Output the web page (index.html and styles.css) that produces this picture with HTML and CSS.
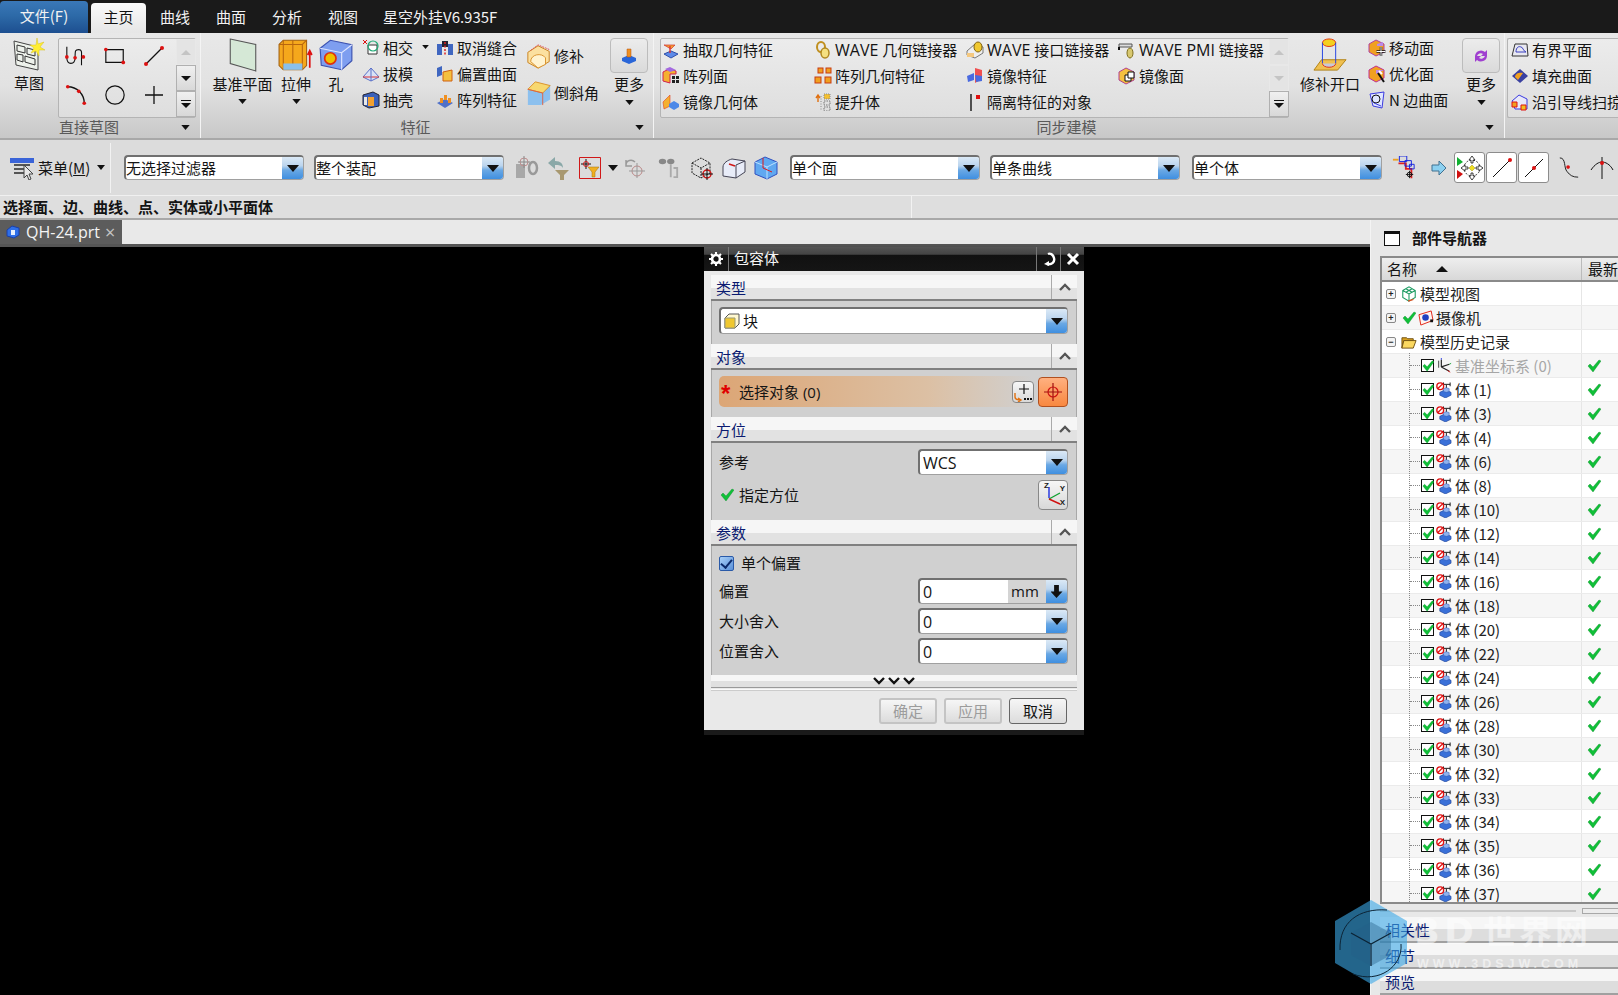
FILE: index.html
```html
<!DOCTYPE html>
<html lang="zh-CN">
<head>
<meta charset="utf-8">
<title>包容体</title>
<link rel="stylesheet" href="styles.css">
</head>
<body>
<svg class="defs" xmlns="http://www.w3.org/2000/svg">
  <symbol id="caret" viewBox="0 0 10 6"><path d="M0 0h10L5 6z" fill="#111"/></symbol>
  <symbol id="sketch" viewBox="0 0 32 34"><path d="M1 3l24 6v23L3 27z" fill="#eef2ec" stroke="#444"/><path d="M4 7l8 2v6l-8-2zM14 10l8 2v6l-8-2zM4 16l6 1v7l-6-2zM12 18l10 3v6l-10-3z" fill="none" stroke="#333"/><path d="M24 0l1 6 6-2-4 5 5 3-6 0 0 6-3-5-5 2 3-5-4-3 6 0z" fill="#ffee33" stroke="#d8c020" stroke-width=".5"/></symbol>
  <symbol id="spline" viewBox="0 0 24 22"><path d="M2 1v12c0 8 9 8 9 0s0-9 4-9 3 4 3 8v9" fill="none" stroke="#111" stroke-width="1.2"/><g fill="#d11"><circle cx="2" cy="12" r="2"/><circle cx="11" cy="13" r="2"/><circle cx="20" cy="12" r="2"/></g></symbol>
  <symbol id="rect" viewBox="0 0 24 20"><path d="M2 3h19v14H2z" fill="none" stroke="#111" stroke-width="1.3"/><circle cx="2" cy="3" r="2" fill="#d11"/><circle cx="21" cy="17" r="2" fill="#d11"/></symbol>
  <symbol id="line" viewBox="0 0 22 22"><path d="M3 19L19 3" stroke="#111" stroke-width="1.3"/><circle cx="3" cy="19" r="2" fill="#d11"/><circle cx="19" cy="3" r="2" fill="#d11"/></symbol>
  <symbol id="arc" viewBox="0 0 24 24"><path d="M3 3c10 0 18 8 18 18" fill="none" stroke="#111" stroke-width="1.4"/><circle cx="3" cy="3" r="2" fill="#d11"/><circle cx="15" cy="8" r="2" fill="#d11"/><circle cx="21" cy="21" r="2" fill="#d11"/></symbol>
  <symbol id="circle" viewBox="0 0 24 24"><circle cx="12" cy="12" r="10" fill="none" stroke="#111" stroke-width="1.3"/></symbol>
  <symbol id="plus" viewBox="0 0 20 20"><path d="M10 1v18M1 10h18" stroke="#111" stroke-width="1.3"/></symbol>
  <symbol id="plane" viewBox="0 0 28 32"><path d="M2 1l24 5v25L2 24z" fill="#d5e8d6" stroke="#555"/></symbol>
  <symbol id="extrude" viewBox="0 0 34 32"><path d="M1 6l4-4h22v24l-4 4H5l-4-4z" fill="#f5a81c" stroke="#a06010"/><path d="M5 2v28M14 2v28M23 6v24M1 6h22l4-4" fill="none" stroke="#b8660e"/><path d="M5 24h18v6H5z" fill="#8ac0ea"/><path d="M30 28V13M28 16l2-4 2 4" fill="none" stroke="#d11" stroke-width="1.6"/></symbol>
  <symbol id="hole" viewBox="0 0 30 30"><path d="M1 9l9-7 19 4v14l-9 8L2 24z" fill="#7e9ef0" stroke="#3c52b0"/><path d="M1 9l19 4 9-7M20 13v15" fill="none" stroke="#dfe6ff"/><circle cx="10" cy="18" r="5" fill="#f0c000" stroke="#e03010" stroke-width="1.5"/></symbol>
  <symbol id="doc" viewBox="0 0 14 14"><path d="M1 5l5-4 7 2v7l-5 3-7-2z" fill="#2f6fe8" stroke="#1a3fa8"/><path d="M5 5h4v5H5z" fill="#e8f0ff"/></symbol>
  <symbol id="s-inter" viewBox="0 0 18 18"><path d="M6 6h9v9H6z" fill="#fff" stroke="#333"/><circle cx="11" cy="7" r="5" fill="none" stroke="#2a7" stroke-width="1.2"/><path d="M1 1l4 4M5 1L1 5" stroke="#d11"/></symbol>
  <symbol id="s-draft" viewBox="0 0 18 18"><path d="M1 12l8-9 8 9-8 4z" fill="#d9e2f6" stroke="#5a70c8"/><path d="M1 12h16" stroke="#d33"/><path d="M9 3v13" stroke="#5a70c8"/></symbol>
  <symbol id="s-shell" viewBox="0 0 18 18"><path d="M1 4l10-3 6 3v11l-10 2-6-3z" fill="#3a60b8" stroke="#223"/><path d="M6 6h6v9H6z" fill="#f2a030"/><path d="M2 6h3v8H2z" fill="#e8e8e8"/></symbol>
  <symbol id="s-unsew" viewBox="0 0 18 18"><path d="M1 5h5v11H1zM12 5h5v11h-5z" fill="#3f66c0"/><path d="M6 2h6v6H6z" fill="#223"/><path d="M9 3v14" stroke="#d22" stroke-dasharray="2 1.5" stroke-width="1.5"/></symbol>
  <symbol id="s-offset" viewBox="0 0 18 18"><path d="M1 3l5-2v9l-5 2z" fill="#3f66c0"/><path d="M7 7l9-2v11H7z" fill="#f4c040" stroke="#d06010"/></symbol>
  <symbol id="s-array" viewBox="0 0 18 18"><path d="M1 12l8-4 8 4-8 5z" fill="#4f70c8"/><path d="M4 7h3v5H4zM8 4h3v5H8zM12 7h3v5h-3z" fill="#f09020"/></symbol>
  <symbol id="s-patch" viewBox="0 0 26 28"><path d="M1 10l11-7 12 6v11l-12 7-11-6z" fill="#fbe0a0" stroke="#c8801c"/><path d="M4 20c0-8 12-10 16-4v7l-8 4z" fill="#fff3d0" stroke="#d89028"/><path d="M4 8l8-6 12 5" fill="none" stroke="#e05050" stroke-dasharray="2 1"/></symbol>
  <symbol id="s-chamfer" viewBox="0 0 26 28"><path d="M1 10v17h14l10-6V6z" fill="#8cc0ee"/><path d="M1 10l8-8 16 4-8 8z" fill="#f7d870" stroke="#d89028"/><path d="M1 10l16 4v13" fill="none" stroke="#e06040"/></symbol>
  <symbol id="more1" viewBox="0 0 16 16"><path d="M1 10l7-3 7 3v3l-7 3-7-3z" fill="#2a66d8"/><path d="M6 1h4v8H6z" fill="#f09020" stroke="#b05010" stroke-width=".5"/></symbol>
  <symbol id="more2" viewBox="0 0 16 16"><path d="M2 8a6 6 0 0 1 10-4l2-2v6H8l2-2a4 4 0 0 0-6 2zM14 8a6 6 0 0 1-10 4l-2 2V8h6l-2 2a4 4 0 0 0 6-2z" fill="#a040d0"/></symbol>
  <symbol id="g-extract" viewBox="0 0 18 18"><path d="M2 13l7-3 7 3-7 4z" fill="#5d8ae8" stroke="#3050a8"/><path d="M2 4h11L9 8z" fill="#f4a030" stroke="#d03030" stroke-width=".7"/><path d="M8 5v7" stroke="#d33" stroke-width="1.4"/></symbol>
  <symbol id="g-chain" viewBox="0 0 18 18"><ellipse cx="7" cy="6" rx="4" ry="5" fill="none" stroke="#c09020" stroke-width="2"/><ellipse cx="11" cy="12" rx="4" ry="5" fill="#f5e080" stroke="#b08820" stroke-width="1.5"/></symbol>
  <symbol id="g-iface" viewBox="0 0 18 18"><path d="M1 10l8-7 8 3v6l-8 5-8-3z" fill="#eee" stroke="#777"/><ellipse cx="12" cy="6" rx="4" ry="5" fill="#f0c830" stroke="#806010"/><path d="M1 12h7v4H1z" fill="#f4c880"/></symbol>
  <symbol id="g-pmi" viewBox="0 0 18 18"><path d="M1 3h13v3H1z" fill="#ddd" stroke="#555"/><path d="M1 6v3" stroke="#111" stroke-width="2"/><ellipse cx="12" cy="12" rx="3" ry="5" fill="#d8c870" stroke="#807020"/></symbol>
  <symbol id="g-aface" viewBox="0 0 18 18"><path d="M1 5l6-3 7 2v3H8v9L1 14z" fill="#f4b030" stroke="#d02050"/><path d="M3 2l5-2 6 3-6 2z" fill="#a46ae0"/><g fill="#222"><rect x="10" y="9" width="3" height="3"/><rect x="14" y="9" width="3" height="3"/><rect x="10" y="13" width="3" height="3"/><rect x="14" y="13" width="3" height="3"/></g></symbol>
  <symbol id="g-cubes" viewBox="0 0 18 18"><g fill="#f0a020" stroke="#c83c10"><rect x="4" y="1" width="5" height="5"/><rect x="12" y="1" width="5" height="5"/><rect x="1" y="10" width="6" height="6"/><rect x="11" y="10" width="6" height="6"/></g></symbol>
  <symbol id="g-mirrorf" viewBox="0 0 18 18"><path d="M9 1l7 2v9l-7 4z" fill="#f05050"/><path d="M1 9l7-3v7l-6 2z" fill="#4a6ae0"/><path d="M9 8l7 1v5l-6 1z" fill="#4a6ae0"/></symbol>
  <symbol id="g-mface" viewBox="0 0 18 18"><path d="M1 5l7-4 8 4v8l-8 4-7-4z" fill="#f4c040" stroke="#b04090"/><path d="M7 8h6v6H7z" fill="#fff" stroke="#111"/><path d="M10 5h6v6h-6z" fill="#fff" stroke="#111"/></symbol>
  <symbol id="g-mbody" viewBox="0 0 18 18"><path d="M1 9l7-7v11l-6 3z" fill="#f4b030" stroke="#e04020" stroke-width=".6"/><path d="M7 11l5-3 5 3v3l-5 3-5-3z" fill="#4c88e8"/></symbol>
  <symbol id="g-promote" viewBox="0 0 18 18"><path d="M10 1h6v5h-6z" fill="#f4c030" stroke="#888" stroke-dasharray="1 1"/><path d="M10 8h6v4h-6zM10 14h6v4h-6z" fill="none" stroke="#777" stroke-dasharray="1.5 1"/><path d="M4 9V3M2 5l2-3 2 3" fill="none" stroke="#e07010" stroke-width="1.4"/><path d="M7 3v14" stroke="#888" stroke-dasharray="1 1.5"/></symbol>
  <symbol id="g-iso" viewBox="0 0 18 18"><path d="M5 1v17" stroke="#111" stroke-width="1.4"/><rect x="10" y="2" width="4" height="4" fill="#e01010"/></symbol>
  <symbol id="patchopen" viewBox="0 0 36 36"><path d="M1 34l8-11h26l-9 11z" fill="#f0c050" stroke="#b08010"/><ellipse cx="17" cy="5" rx="7" ry="4" fill="#f4d020" stroke="#e03010"/><path d="M10 5v22M24 5v22" stroke="#2040e0" fill="none"/><path d="M10 27a7 4 0 0 0 14 0" fill="#c8c8d8" stroke="#e03010"/></symbol>
  <symbol id="s-move" viewBox="0 0 18 18"><path d="M1 5l7-4 8 4v8l-8 4-7-4z" fill="#f0a020" stroke="#b040a0"/><path d="M9 5l6-2v4h-6z" fill="#b98ae8"/><path d="M13 8v9M8.500 12.500h9" stroke="#111" stroke-width="2.400"/><path d="M13 8v9M8.500 12.500h9" stroke="#fff"/></symbol>
  <symbol id="s-opt" viewBox="0 0 18 18"><path d="M1 5l7-4 8 4v8l-8 4-7-4z" fill="#f0a020" stroke="#c03090"/><path d="M8 5l8 0-8 4z" fill="#b98ae8"/><path d="M10 8l6 9" stroke="#111" stroke-width="2"/><path d="M11 6l3 3" stroke="#fff" stroke-width="2"/></symbol>
  <symbol id="s-nside" viewBox="0 0 18 18"><path d="M2 3l14-2-2 16-9-2z" fill="#dfe6ff" stroke="#3a3ae0"/><circle cx="8" cy="8" r="4" fill="none" stroke="#111"/><path d="M6 12l7 3" stroke="#3a3ae0"/></symbol>
  <symbol id="s-bound" viewBox="0 0 18 16"><path d="M4 2h12l1 12H1z" fill="#e8e8f0" stroke="#333"/><path d="M5 10c0-5 3-6 5-5 2 0 2 4 5 5z" fill="none" stroke="#3a40c0"/></symbol>
  <symbol id="s-fill" viewBox="0 0 18 16"><path d="M1 8l8-7 8 7-8 7z" fill="#3a40a0"/><path d="M4 9c0-4 5-5 8-4l-5 7z" fill="#f0a020"/></symbol>
  <symbol id="s-sweep" viewBox="0 0 18 18"><path d="M1 8l7-6 8 4v10H4z" fill="#e8e8f8" stroke="#3a3ae0"/><path d="M1 9h5v5H1z" fill="#f0a020" stroke="#e01010"/><path d="M10 12h5v5h-5z" fill="#f0c020" stroke="#e01010"/></symbol>
  <symbol id="menu" viewBox="0 0 24 24"><path d="M0 2h24v5H0z" fill="#3a64d8"/><path d="M4 9h16M4 13h14M4 17h12" stroke="#555" stroke-width="2"/><path d="M14 9l0 13 3-3 2 5 2-1-2-5h4z" fill="#e8e8e8" stroke="#444"/></symbol>
  <symbol id="t-sel1" viewBox="0 0 24 24"><path d="M1 8h9v14H1z" fill="#a8a8a8"/><circle cx="9" cy="6" r="4" fill="none" stroke="#c09090"/><path d="M9 0v12M3 6h12" stroke="#888"/><ellipse cx="18" cy="12" rx="4" ry="6" fill="none" stroke="#999" stroke-width="2.500"/></symbol>
  <symbol id="t-sel2" viewBox="0 0 24 24"><path d="M1 7l7-6v4c6 0 8 3 8 7-2-3-4-3-8-3v4z" fill="#8aa8a8"/><path d="M8 14h14l-5 5v5h-4v-5z" fill="#a89870"/></symbol>
  <symbol id="t-sel3" viewBox="0 0 22 22"><path d="M.5.500h21v21H.5z" fill="none" stroke="#d01818"/><path d="M7 2v10M2 7h10" stroke="#111"/><circle cx="7" cy="7" r="2.500" fill="none" stroke="#d01818"/><path d="M9 10h11l-4 5v5h-3v-5z" fill="#f0b020" stroke="#a07010" stroke-width=".5"/></symbol>
  <symbol id="t-sel4" viewBox="0 0 22 22"><path d="M2 8c0-5 6-6 9-3M2 3v6h6" fill="none" stroke="#999" stroke-width="1.500"/><circle cx="13" cy="14" r="5" fill="none" stroke="#b88"/><path d="M13 6v15M5 14h16" stroke="#999"/></symbol>
  <symbol id="t-sel5" viewBox="0 0 22 24"><ellipse cx="5" cy="5" rx="4" ry="3" fill="#888"/><ellipse cx="14" cy="5" rx="4" ry="3" fill="#888"/><path d="M14 8v14M17 12h4v10h-4" fill="none" stroke="#aaa" stroke-width="2"/></symbol>
  <symbol id="t-sel6" viewBox="0 0 24 24"><path d="M2 7l9-5 9 5v10l-9 5-9-5zM2 7l9 5 9-5M11 12v10" fill="none" stroke="#222" stroke-dasharray="2 1"/><circle cx="17" cy="18" r="4" fill="none" stroke="#d01010" stroke-width="1.400"/><path d="M17 12v12M11 18h12" stroke="#111"/></symbol>
  <symbol id="t-sel7" viewBox="0 0 24 22"><path d="M1 10c0-4 5-7 9-8l13 2v11l-9 6-13-2z" fill="#e8ecf8" stroke="#445"/><path d="M14 8l9-4M14 8v13" stroke="#445"/><path d="M7 7l6 2" stroke="#d01818" stroke-width="1.600"/></symbol>
  <symbol id="t-sel8" viewBox="0 0 24 24"><path d="M1 6l10-5 12 5v12l-10 5L1 18z" fill="#60a8f0" stroke="#3050c0"/><path d="M1 6l12 5 10-5M13 11v12" fill="none" stroke="#bde0ff"/><path d="M9 2v10l9 4" fill="none" stroke="#e01818"/></symbol>
  <symbol id="t-route" viewBox="0 0 24 26"><path d="M6 8h8v6h6v10" fill="none" stroke="#e02020" stroke-width="2"/><path d="M0 4h6" stroke="#f0a020" stroke-width="2"/><path d="M7 0h8v6H7zM13 5h7v6h-7zM18 9h5v5h-5z" fill="none" stroke="#1020e0"/><circle cx="18" cy="20" r="2.500" fill="none" stroke="#111"/><path d="M18 16v8M14 20h8" stroke="#111"/></symbol>
  <symbol id="t-arrow" viewBox="0 0 16 16"><path d="M1 5h7V1l7 7-7 7v-4H1z" fill="#8cd0f0" stroke="#407090"/></symbol>
  <symbol id="t-snap" viewBox="0 0 28 28"><path d="M1 3l6 5-6 4z" fill="#10b030"/><path d="M1 16l6 4-6 5z" fill="#d01010"/><circle cx="16" cy="14" r="8" fill="none" stroke="#333" stroke-dasharray="2 1.500"/><path d="M16 11l3 3-3 3-3-3z" fill="#f0e020" stroke="#a09010" stroke-width=".5"/><path d="M16 2l-3 4h2v3h2V6h2zM16 26l-3-4h2v-3h2v3h2zM27 14l-4-3v2h-3v2h3v2zM5 14l4-3v2h3v2H9v2z" fill="#fff" stroke="#111" stroke-width=".8"/></symbol>
  <symbol id="t-l1" viewBox="0 0 24 24"><path d="M3 21L20 4" stroke="#111"/><circle cx="20" cy="4" r="2" fill="#d11"/></symbol>
  <symbol id="t-l2" viewBox="0 0 24 24"><path d="M3 21L21 3" stroke="#111"/><circle cx="12" cy="12" r="2" fill="#d11"/></symbol>
  <symbol id="t-curve" viewBox="0 0 22 24"><path d="M1 1c7 0 4 11 8 15 3 4 6 6 12 6" fill="none" stroke="#111"/><circle cx="10" cy="11" r="2" fill="#d11"/></symbol>
  <symbol id="t-cross" viewBox="0 0 24 24"><path d="M1 14c4-6 8-8 11-8s8 2 11 8M12 1v22" fill="none" stroke="#111"/><circle cx="12" cy="7" r="2" fill="#d11"/></symbol>
  <symbol id="block" viewBox="0 0 16 16"><path d="M1 5l4-4h10v10l-4 4H1z" fill="#fff8d0" stroke="#555"/><path d="M1 5h10v10H1z" fill="#f0c830" stroke="#997"/></symbol>
  <symbol id="collect" viewBox="0 0 20 20"><path d="M11 2v10M6 7h10" stroke="#111" stroke-width="1.200"/><path d="M2 11v4c0 2 2 3 6 3M5 16l3 2-3 2" fill="none" stroke="#e07010" stroke-width="1.400"/><path d="M11 16h2v2h-2zM14 16h2v2h-2zM17 16h2v2h-2z" fill="#111"/></symbol>
  <symbol id="target" viewBox="0 0 22 22"><circle cx="11" cy="11" r="5" fill="none" stroke="#d01010" stroke-width="1.200"/><path d="M11 2v18M2 11h18" stroke="#a01010" stroke-width="1.200"/></symbol>
  <symbol id="axes" viewBox="0 0 26 26"><path d="M9 16V5" stroke="#2030e0" stroke-width="1.400"/><path d="M9 17l11-6" stroke="#10a030" stroke-width="1.400"/><path d="M9 17l11 5" stroke="#d01010" stroke-width="1.400"/></symbol>
  <symbol id="check" viewBox="0 0 14 14"><path d="M1 7l2-2 3 3 6-7 2 1-8 11z" fill="#10c038" stroke="#0a8a28" stroke-width=".4"/></symbol>
  <symbol id="mview" viewBox="0 0 18 18"><path d="M2 5l7-4 7 4v8l-7 4-7-4zM2 5l7 4 7-4M9 9v8M5.500 3l7 4M12.500 3l-7 4" fill="none" stroke="#1a9a60" stroke-width="1.200"/><path d="M8 17l6-2" stroke="#e05020" stroke-width="1.400"/></symbol>
  <symbol id="camera" viewBox="0 0 17 17"><path d="M1 5l13-4 2 10-13 5z" fill="#fff4f0" stroke="#e02010"/><circle cx="8" cy="8" r="3.500" fill="#2040c0"/><path d="M13 10h3v3h-3z" fill="#111"/></symbol>
  <symbol id="folder" viewBox="0 0 17 15"><path d="M1 3h5l1 1h6v2H3l-2 8z" fill="#d8a020" stroke="#705010"/><path d="M3 6h13l-3 8H1z" fill="#fbd860" stroke="#705010"/></symbol>
  <symbol id="csys" viewBox="0 0 16 18"><path d="M5 10V2M5 10l9-3M5 10l9 5" fill="none" stroke="#222" stroke-width="1.300"/><path d="M2 3v8" stroke="#333"/><path d="M5 2V0" stroke="#2030e0"/><path d="M14 7l2-1" stroke="#10a030"/><path d="M12 14l3 2" stroke="#d01010"/></symbol>
  <symbol id="body" viewBox="0 0 17 17"><path d="M8 2.500h7M8 .5v4M15 .5v4M11 3v4" fill="none" stroke="#111"/><path d="M4 11l6-3 6 3v3l-6 3-6-3z" fill="#3a70d8" stroke="#1d3f90" stroke-width=".6"/><path d="M8 7l3-1 3 1v3l-3 1-3-1z" fill="#8fb2ee" stroke="#2c55b0" stroke-width=".5"/><circle cx="4.500" cy="4.500" r="3.600" fill="#fff" stroke="#e01010" stroke-width="1.500"/><path d="M2 7l5-5" stroke="#e01010" stroke-width="1.400"/></symbol>
  <symbol id="gear" viewBox="0 0 16 16"><circle cx="8" cy="8" r="4.500" fill="none" stroke="#fff" stroke-width="3"/><path d="M8 0v3M8 13v3M0 8h3M13 8h3M2.300 2.300l2 2M11.700 11.700l2 2M13.700 2.300l-2 2M4.300 11.700l-2 2" stroke="#fff" stroke-width="2.400"/></symbol>
  <symbol id="reset" viewBox="0 0 14 14"><path d="M5 12c5 1 8-2 7-6S8 1 6 2" fill="none" stroke="#fff" stroke-width="2.400"/><path d="M2 12l5-3v5z" fill="#fff"/></symbol>
  <symbol id="close" viewBox="0 0 14 14"><path d="M2 2l10 10M12 2L2 12" stroke="#fff" stroke-width="3"/></symbol>
  <symbol id="chev-up" viewBox="0 0 12 8"><path d="M1 7l5-5 5 5" fill="none" stroke="#555" stroke-width="2.400"/></symbol>
  <symbol id="chev-down" viewBox="0 0 12 8"><path d="M1 1l5 5 5-5" fill="none" stroke="#111" stroke-width="2.400"/></symbol>
  <symbol id="logo" viewBox="0 0 72 84"><path d="M36 0l36 21v42L36 84 0 63V21z" fill="#3aa8e8" fill-opacity=".6"/><path d="M36 22l20 11v22L36 66 16 55V33z" fill="#245f86" fill-opacity=".4"/><path d="M16 33l20 11 20-11M36 44v22" fill="none" stroke="#0c2436" stroke-width="1.200"/><path d="M5 50C4 22 24 8 52 10M18 74C44 84 68 66 66 44" fill="none" stroke="#0c2436" stroke-width="1"/></symbol>
</svg>

<nav class="menubar">
  <a class="file-tab">文件(F)</a>
  <a class="home-tab">主页</a>
  <a class="mtab">曲线</a>
  <a class="mtab">曲面</a>
  <a class="mtab">分析</a>
  <a class="mtab">视图</a>
  <a class="mtab mtab-last">星空外挂V6.935F</a>
</nav>

<section class="ribbon">
  <div class="rgroup rg-sketch">
    <div class="rbody">
      <button class="big w-sketch"><svg class="ic-sketch"><use href="#sketch"/></svg><span>草图</span></button>
      <div class="gallery g-sketch">
        <div class="sketch-grid">
          <div class="cell"><svg class="ic22"><use href="#spline"/></svg></div>
          <div class="cell"><svg class="ic22"><use href="#rect"/></svg></div>
          <div class="cell"><svg class="ic22"><use href="#line"/></svg></div>
          <div class="cell"><svg class="ic22"><use href="#arc"/></svg></div>
          <div class="cell"><svg class="ic22"><use href="#circle"/></svg></div>
          <div class="cell"><svg class="ic20"><use href="#plus"/></svg></div>
        </div>
        <div class="gscroll">
          <span class="gs gs-off"><i class="tri-up"></i></span>
          <span class="gs"><i class="tri-down"></i></span>
          <span class="gs"><i class="tri-more"></i></span>
        </div>
      </div>
    </div>
    <div class="rlabel"><span>直接草图</span><svg class="gcaret"><use href="#caret"/></svg></div>
  </div>

  <div class="rgroup rg-feature">
    <div class="rbody">
      <button class="big w-plane"><svg class="ic-big"><use href="#plane"/></svg><span>基准平面</span><svg class="caret"><use href="#caret"/></svg></button>
      <button class="big w-extrude"><svg class="ic-big"><use href="#extrude"/></svg><span>拉伸</span><svg class="caret"><use href="#caret"/></svg></button>
      <button class="big w-hole"><svg class="ic-big"><use href="#hole"/></svg><span>孔</span></button>
      <div class="scol w-col1">
        <div class="sitem"><svg class="ic18"><use href="#s-inter"/></svg><span>相交</span><svg class="caret-s"><use href="#caret"/></svg></div>
        <div class="sitem"><svg class="ic18"><use href="#s-draft"/></svg><span>拔模</span></div>
        <div class="sitem"><svg class="ic18"><use href="#s-shell"/></svg><span>抽壳</span></div>
      </div>
      <div class="scol w-col2">
        <div class="sitem"><svg class="ic18"><use href="#s-unsew"/></svg><span>取消缝合</span></div>
        <div class="sitem"><svg class="ic18"><use href="#s-offset"/></svg><span>偏置曲面</span></div>
        <div class="sitem"><svg class="ic18"><use href="#s-array"/></svg><span>阵列特征</span></div>
      </div>
      <div class="scol w-col3">
        <div class="sitem"><svg class="ic26"><use href="#s-patch"/></svg><span>修补</span></div>
        <div class="sitem"><svg class="ic26"><use href="#s-chamfer"/></svg><span>倒斜角</span></div>
      </div>
      <div class="more-wrap">
        <button class="more-btn"><svg class="ic16"><use href="#more1"/></svg></button>
        <span>更多</span><svg class="caret"><use href="#caret"/></svg>
      </div>
    </div>
    <div class="rlabel"><span>特征</span><svg class="gcaret"><use href="#caret"/></svg></div>
  </div>

  <div class="rgroup rg-sync">
    <div class="rbody">
      <div class="gallery g-sync">
        <div class="sync-grid">
          <div class="gitem"><svg class="ic18"><use href="#g-extract"/></svg><span>抽取几何特征</span></div>
          <div class="gitem"><svg class="ic18"><use href="#g-chain"/></svg><span><b class="wave">WAVE</b> 几何链接器</span></div>
          <div class="gitem"><svg class="ic18"><use href="#g-iface"/></svg><span><b class="wave">WAVE</b> 接口链接器</span></div>
          <div class="gitem"><svg class="ic18"><use href="#g-pmi"/></svg><span><b class="wave">WAVE PMI</b> 链接器</span></div>
          <div class="gitem"><svg class="ic18"><use href="#g-aface"/></svg><span>阵列面</span></div>
          <div class="gitem"><svg class="ic18"><use href="#g-cubes"/></svg><span>阵列几何特征</span></div>
          <div class="gitem"><svg class="ic18"><use href="#g-mirrorf"/></svg><span>镜像特征</span></div>
          <div class="gitem"><svg class="ic18"><use href="#g-mface"/></svg><span>镜像面</span></div>
          <div class="gitem"><svg class="ic18"><use href="#g-mbody"/></svg><span>镜像几何体</span></div>
          <div class="gitem"><svg class="ic18"><use href="#g-promote"/></svg><span>提升体</span></div>
          <div class="gitem"><svg class="ic18"><use href="#g-iso"/></svg><span>隔离特征的对象</span></div>
        </div>
        <div class="gscroll">
          <span class="gs gs-off"><i class="tri-up"></i></span>
          <span class="gs gs-off"><i class="tri-down"></i></span>
          <span class="gs"><i class="tri-more"></i></span>
        </div>
      </div>
      <button class="big w-patchopen"><svg class="ic-big"><use href="#patchopen"/></svg><span>修补开口</span></button>
      <div class="scol w-col4">
        <div class="sitem"><svg class="ic18"><use href="#s-move"/></svg><span>移动面</span></div>
        <div class="sitem"><svg class="ic18"><use href="#s-opt"/></svg><span>优化面</span></div>
        <div class="sitem"><svg class="ic18"><use href="#s-nside"/></svg><span>N 边曲面</span></div>
      </div>
      <div class="more-wrap">
        <button class="more-btn"><svg class="ic16"><use href="#more2"/></svg></button>
        <span>更多</span><svg class="caret"><use href="#caret"/></svg>
      </div>
    </div>
    <div class="rlabel"><span>同步建模</span><svg class="gcaret"><use href="#caret"/></svg></div>
  </div>

  <div class="rgroup rg-surface">
    <div class="gallery g-surface">
      <div class="sitem"><svg class="ic18"><use href="#s-bound"/></svg><span>有界平面</span></div>
      <div class="sitem"><svg class="ic18"><use href="#s-fill"/></svg><span>填充曲面</span></div>
      <div class="sitem"><svg class="ic18"><use href="#s-sweep"/></svg><span>沿引导线扫掠</span></div>
    </div>
  </div>
</section>

<section class="selbar">
  <div class="menu-btn"><svg class="ic24"><use href="#menu"/></svg><span>菜单(<u>M</u>)</span><svg class="caret"><use href="#caret"/></svg></div>
  <div class="combo c-filter"><span>无选择过滤器</span><i class="dd"></i></div>
  <div class="combo c-assem"><span>整个装配</span><i class="dd"></i></div>
  <div class="tools t-a">
    <svg class="ic24"><use href="#t-sel1"/></svg>
    <svg class="ic24"><use href="#t-sel2"/></svg>
    <svg class="ic22"><use href="#t-sel3"/></svg>
    <svg class="caret"><use href="#caret"/></svg>
    <svg class="ic22"><use href="#t-sel4"/></svg>
    <svg class="ic22 push"><use href="#t-sel5"/></svg>
    <svg class="ic24 push"><use href="#t-sel6"/></svg>
    <svg class="ic24"><use href="#t-sel7"/></svg>
    <svg class="ic24"><use href="#t-sel8"/></svg>
  </div>
  <div class="combo c-face"><span>单个面</span><i class="dd"></i></div>
  <div class="combo c-curve"><span>单条曲线</span><i class="dd"></i></div>
  <div class="combo c-body"><span>单个体</span><i class="dd"></i></div>
  <div class="tools t-b">
    <svg class="ic24"><use href="#t-route"/></svg>
    <svg class="ic16"><use href="#t-arrow"/></svg>
    <span class="snaps">
      <span class="snap"><svg class="ic28"><use href="#t-snap"/></svg></span>
      <span class="snap"><svg class="ic24"><use href="#t-l1"/></svg></span>
      <span class="snap"><svg class="ic24"><use href="#t-l2"/></svg></span>
    </span>
    <svg class="ic22"><use href="#t-curve"/></svg>
    <svg class="ic24"><use href="#t-cross"/></svg>
  </div>
</section>

<div class="cue"><span class="cue-msg">选择面、边、曲线、点、实体或小平面体</span><span class="cue-rest"></span></div>

<main class="workspace">
  <div class="graphics">
    <div class="doc-tabs"><span class="doc-tab"><svg class="ic14"><use href="#doc"/></svg><span>QH-24.prt</span><b>×</b></span></div>
    <div class="canvas"></div>
  </div>
  <aside class="navigator">
    <header class="nav-title"><i class="win-icon"></i><strong>部件导航器</strong></header>
    <div class="tree">
      <div class="thead"><div class="th-name"><span>名称</span><i class="sort"></i></div><div class="th-new">最新</div></div>
      <div class="tbody">
        <div class="row"><div class="name"><i class="exp">+</i><svg class="ic16 mv"><use href="#mview"/></svg><span>模型视图</span></div><div class="new"></div></div>
        <div class="row alt"><div class="name"><i class="exp">+</i><svg class="ic14 cam-check"><use href="#check"/></svg><svg class="ic16"><use href="#camera"/></svg><span class="cam">摄像机</span></div><div class="new"></div></div>
        <div class="row"><div class="name"><i class="exp">−</i><svg class="ic16 mv"><use href="#folder"/></svg><span>模型历史记录</span></div><div class="new"></div></div>
        <div class="row alt leaf muted"><div class="name"><i class="box"><svg class="ic12"><use href="#check"/></svg></i><svg class="ic16"><use href="#csys"/></svg><span>基准坐标系 (0)</span></div><div class="new"><svg class="ic14"><use href="#check"/></svg></div></div>
        <div class="row leaf"><div class="name"><i class="box"><svg class="ic12"><use href="#check"/></svg></i><svg class="ic16"><use href="#body"/></svg><span>体 (1)</span></div><div class="new"><svg class="ic14"><use href="#check"/></svg></div></div>
        <div class="row alt leaf"><div class="name"><i class="box"><svg class="ic12"><use href="#check"/></svg></i><svg class="ic16"><use href="#body"/></svg><span>体 (3)</span></div><div class="new"><svg class="ic14"><use href="#check"/></svg></div></div>
        <div class="row leaf"><div class="name"><i class="box"><svg class="ic12"><use href="#check"/></svg></i><svg class="ic16"><use href="#body"/></svg><span>体 (4)</span></div><div class="new"><svg class="ic14"><use href="#check"/></svg></div></div>
        <div class="row alt leaf"><div class="name"><i class="box"><svg class="ic12"><use href="#check"/></svg></i><svg class="ic16"><use href="#body"/></svg><span>体 (6)</span></div><div class="new"><svg class="ic14"><use href="#check"/></svg></div></div>
        <div class="row leaf"><div class="name"><i class="box"><svg class="ic12"><use href="#check"/></svg></i><svg class="ic16"><use href="#body"/></svg><span>体 (8)</span></div><div class="new"><svg class="ic14"><use href="#check"/></svg></div></div>
        <div class="row alt leaf"><div class="name"><i class="box"><svg class="ic12"><use href="#check"/></svg></i><svg class="ic16"><use href="#body"/></svg><span>体 (10)</span></div><div class="new"><svg class="ic14"><use href="#check"/></svg></div></div>
        <div class="row leaf"><div class="name"><i class="box"><svg class="ic12"><use href="#check"/></svg></i><svg class="ic16"><use href="#body"/></svg><span>体 (12)</span></div><div class="new"><svg class="ic14"><use href="#check"/></svg></div></div>
        <div class="row alt leaf"><div class="name"><i class="box"><svg class="ic12"><use href="#check"/></svg></i><svg class="ic16"><use href="#body"/></svg><span>体 (14)</span></div><div class="new"><svg class="ic14"><use href="#check"/></svg></div></div>
        <div class="row leaf"><div class="name"><i class="box"><svg class="ic12"><use href="#check"/></svg></i><svg class="ic16"><use href="#body"/></svg><span>体 (16)</span></div><div class="new"><svg class="ic14"><use href="#check"/></svg></div></div>
        <div class="row alt leaf"><div class="name"><i class="box"><svg class="ic12"><use href="#check"/></svg></i><svg class="ic16"><use href="#body"/></svg><span>体 (18)</span></div><div class="new"><svg class="ic14"><use href="#check"/></svg></div></div>
        <div class="row leaf"><div class="name"><i class="box"><svg class="ic12"><use href="#check"/></svg></i><svg class="ic16"><use href="#body"/></svg><span>体 (20)</span></div><div class="new"><svg class="ic14"><use href="#check"/></svg></div></div>
        <div class="row alt leaf"><div class="name"><i class="box"><svg class="ic12"><use href="#check"/></svg></i><svg class="ic16"><use href="#body"/></svg><span>体 (22)</span></div><div class="new"><svg class="ic14"><use href="#check"/></svg></div></div>
        <div class="row leaf"><div class="name"><i class="box"><svg class="ic12"><use href="#check"/></svg></i><svg class="ic16"><use href="#body"/></svg><span>体 (24)</span></div><div class="new"><svg class="ic14"><use href="#check"/></svg></div></div>
        <div class="row alt leaf"><div class="name"><i class="box"><svg class="ic12"><use href="#check"/></svg></i><svg class="ic16"><use href="#body"/></svg><span>体 (26)</span></div><div class="new"><svg class="ic14"><use href="#check"/></svg></div></div>
        <div class="row leaf"><div class="name"><i class="box"><svg class="ic12"><use href="#check"/></svg></i><svg class="ic16"><use href="#body"/></svg><span>体 (28)</span></div><div class="new"><svg class="ic14"><use href="#check"/></svg></div></div>
        <div class="row alt leaf"><div class="name"><i class="box"><svg class="ic12"><use href="#check"/></svg></i><svg class="ic16"><use href="#body"/></svg><span>体 (30)</span></div><div class="new"><svg class="ic14"><use href="#check"/></svg></div></div>
        <div class="row leaf"><div class="name"><i class="box"><svg class="ic12"><use href="#check"/></svg></i><svg class="ic16"><use href="#body"/></svg><span>体 (32)</span></div><div class="new"><svg class="ic14"><use href="#check"/></svg></div></div>
        <div class="row alt leaf"><div class="name"><i class="box"><svg class="ic12"><use href="#check"/></svg></i><svg class="ic16"><use href="#body"/></svg><span>体 (33)</span></div><div class="new"><svg class="ic14"><use href="#check"/></svg></div></div>
        <div class="row leaf"><div class="name"><i class="box"><svg class="ic12"><use href="#check"/></svg></i><svg class="ic16"><use href="#body"/></svg><span>体 (34)</span></div><div class="new"><svg class="ic14"><use href="#check"/></svg></div></div>
        <div class="row alt leaf"><div class="name"><i class="box"><svg class="ic12"><use href="#check"/></svg></i><svg class="ic16"><use href="#body"/></svg><span>体 (35)</span></div><div class="new"><svg class="ic14"><use href="#check"/></svg></div></div>
        <div class="row leaf"><div class="name"><i class="box"><svg class="ic12"><use href="#check"/></svg></i><svg class="ic16"><use href="#body"/></svg><span>体 (36)</span></div><div class="new"><svg class="ic14"><use href="#check"/></svg></div></div>
        <div class="row alt leaf"><div class="name"><i class="box"><svg class="ic12"><use href="#check"/></svg></i><svg class="ic16"><use href="#body"/></svg><span>体 (37)</span></div><div class="new"><svg class="ic14"><use href="#check"/></svg></div></div>
      </div>
    </div>
    <div class="hscroll"><i class="hs-track"></i><i class="hs-thumb"></i></div>
    <div class="nav-sec">相关性</div>
    <div class="nav-sec">细节</div>
    <div class="nav-sec">预览</div>
  </aside>
</main>

<section class="dialog">
  <header class="dlg-title">
    <span class="dt-gear"><svg class="ic14"><use href="#gear"/></svg></span>
    <span class="dt-name">包容体</span>
    <span class="dt-btn"><svg class="ic14"><use href="#reset"/></svg></span>
    <span class="dt-btn"><svg class="ic14"><use href="#close"/></svg></span>
  </header>
  <div class="dlg-body">
    <div class="sec-h"><span>类型</span><i class="sec-c"><svg class="chev"><use href="#chev-up"/></svg></i></div>
    <div class="sec-b b-type">
      <div class="combo c-type"><svg class="ic16"><use href="#block"/></svg><span>块</span><i class="dd"></i></div>
    </div>
    <div class="sec-h"><span>对象</span><i class="sec-c"><svg class="chev"><use href="#chev-up"/></svg></i></div>
    <div class="sec-b b-obj">
      <div class="sel-row">
        <span class="star">*</span><span class="sel-text">选择对象 (0)</span>
        <span class="tbtn tbtn-s"><svg class="ic20"><use href="#collect"/></svg></span>
        <span class="tbtn tbtn-on"><svg class="ic22"><use href="#target"/></svg></span>
      </div>
    </div>
    <div class="sec-h"><span>方位</span><i class="sec-c"><svg class="chev"><use href="#chev-up"/></svg></i></div>
    <div class="sec-b b-ori">
      <div class="frow"><label>参考</label><div class="combo c-field"><span class="latin">WCS</span><i class="dd"></i></div></div>
      <div class="frow frow-ori"><svg class="ic14"><use href="#check"/></svg><span class="ori-text">指定方位</span><span class="tbtn tbtn-axes"><svg class="ic26"><use href="#axes"/></svg><b class="ax-y">Y</b><b class="ax-x">X</b><b class="ax-z">Z</b></span></div>
    </div>
    <div class="sec-h"><span>参数</span><i class="sec-c"><svg class="chev"><use href="#chev-up"/></svg></i></div>
    <div class="sec-b b-par">
      <div class="chk-row"><i class="chk"></i><span>单个偏置</span></div>
      <div class="frow f30"><label>偏置</label><div class="combo c-field"><span class="latin val">0</span><span class="unit">mm</span><i class="dd dd-arrow"></i></div></div>
      <div class="frow f30"><label>大小舍入</label><div class="combo c-field"><span class="latin">0</span><i class="dd"></i></div></div>
      <div class="frow f30"><label>位置舍入</label><div class="combo c-field"><span class="latin">0</span><i class="dd"></i></div></div>
    </div>
    <div class="sec-more"><svg class="chev"><use href="#chev-down"/></svg><svg class="chev"><use href="#chev-down"/></svg><svg class="chev"><use href="#chev-down"/></svg></div>
    <div class="dlg-actions">
      <button class="act off">确定</button>
      <button class="act off">应用</button>
      <button class="act">取消</button>
    </div>
  </div>
</section>

<div class="watermark">
  <svg class="wm-logo"><use href="#logo"/></svg>
  <div class="wm-cn"><span class="wm-3d">3D</span>世界网</div>
  <div class="wm-en">WWW.3DSJW.COM</div>
</div>
</body>
</html>
```

FILE: styles.css
```css
* { box-sizing: border-box; }
html, body { margin: 0; padding: 0; }
body {
  width: 1618px; height: 995px; overflow: hidden; position: relative;
  display: flex; flex-direction: column;
  font: 15px/20px "Noto Sans CJK SC", "Noto Sans", sans-serif;
  color: #141414; background: #e8e8e8;
}
.defs { display: none; }
svg { display: block; flex: none; }
button { font: inherit; color: inherit; padding: 0; border: 0; background: none; }

.ic12 { width: 12px; height: 12px; } .ic14 { width: 14px; height: 14px; }
.ic16 { width: 16px; height: 16px; } .ic18 { width: 18px; height: 18px; }
.ic20 { width: 20px; height: 20px; } .ic22 { width: 22px; height: 22px; }
.ic24 { width: 24px; height: 24px; } .ic26 { width: 26px; height: 26px; }
.ic28 { width: 28px; height: 28px; }
.caret { width: 10px; height: 6px; }

/* menu bar */
.menubar { height: 33px; flex: none; background: #1a1a1a; display: flex; color: #f2f2f2; }
.file-tab {
  width: 88px; margin-top: 1px; border-radius: 4px 4px 0 0; text-align: center; line-height: 30px;
  background: linear-gradient(#3a78b8, #2d6aa8 45%, #1d4f90);
}
.home-tab {
  width: 55px; margin: 3px 0 0 3px; border-radius: 4px 4px 0 0; text-align: center; line-height: 28px;
  color: #111; background: linear-gradient(#fafafa, #e6e6e6);
}
.mtab { width: 56px; line-height: 33px; text-align: center; }
.home-tab + .mtab { margin-left: 1px; }
.mtab-last { width: auto; margin-left: 12px; }

/* ribbon */
.ribbon {
  height: 107px; flex: none; display: flex; overflow: hidden;
  background: linear-gradient(#e8e8e8, #e2e2e2 50%, #c8c8c8);
  border-bottom: 2px solid #a8a8a8;
}
.rgroup { display: flex; flex-direction: column; flex: none; padding-top: 5px; position: relative; }
.rg-sketch { width: 201px; border-right: 1px solid #f4f4f4; }
.rg-feature { width: 453px; padding-left: 10px; border-right: 1px solid #f4f4f4; }
.rg-sync { width: 851px; padding-left: 6px; border-right: 1px solid #f4f4f4; }
.rg-surface { flex: 1; padding-left: 2px; min-width: 0; }
.rbody { height: 80px; display: flex; }
.rlabel { flex: 1; position: relative; text-align: center; color: #5a5a5a; line-height: 20px; margin-top: -1px; padding-right: 22px; }
.rg-feature .rlabel { padding-right: 33px; }
.rg-sync .rlabel { padding-right: 31px; }
.gcaret { position: absolute; right: 10px; top: 8px; width: 9px; height: 5px; }
.rg-feature .gcaret { right: 9px; }

.big { display: flex; flex-direction: column; align-items: center; flex: none; }
.big > span { line-height: 20px; }
.big .ic-big { height: 34px; width: 36px; margin-bottom: 2px; }
.big .caret { margin-top: 5px; width: 9px; height: 5px; }
.big .ic-sketch { width: 32px; height: 34px; margin-bottom: 1px; }
.w-sketch { width: 58px; }
.w-plane { width: 63px; }
.w-extrude { width: 44px; }
.w-hole { width: 36px; }
.w-patchopen { width: 64px; margin-left: 9px; }

.gallery { height: 80px; display: flex; border: 1px solid #b4b4b4; border-radius: 2px; background: linear-gradient(#ececec, #dedede); flex: none; }
.g-sketch { width: 138px; }
.sketch-grid { width: 117px; display: grid; grid-template-columns: repeat(3, 39px); grid-template-rows: 39px 39px; margin: -3px 0 0 -3px; }
.g-sketch .gscroll { margin-left: 3px; }
.cell { display: flex; align-items: center; justify-content: center; }
.gscroll { width: 20px; display: flex; flex-direction: column; flex: none; }
.gs { flex: 1; display: flex; align-items: center; justify-content: center; border: 1px solid #b0b0b0; background: linear-gradient(#f0f0f0, #d8d8d8); }
.gs-off { border-color: #e8e8e8; background: #e4e4e4; }
.tri-up { border: 5px solid transparent; border-top: 0; border-bottom: 5px solid #c4c4c4; }
.tri-down { border: 5px solid transparent; border-bottom: 0; border-top: 5px solid #111; }
.gs-off .tri-down { border-top-color: #c4c4c4; }
.tri-more { width: 10px; height: 8px; border-top: 1px solid #111; position: relative; }
.tri-more::after { content: ""; position: absolute; left: 0; top: 2px; border: 5px solid transparent; border-bottom: 0; border-top: 5px solid #111; }

.scol { display: flex; flex-direction: column; flex: none; margin-top: -3px; }
.sitem { display: flex; align-items: center; gap: 3px; height: 26px; white-space: nowrap; }
.caret-s { width: 7px; height: 4px; margin-left: 6px; margin-bottom: 3px; }
.w-col1 { width: 74px; margin-left: 8px; }
.w-col2 { width: 90px; }
.w-col3 { width: 84px; gap: 11px; margin-top: 5px; }
.w-col3 .sitem { height: 26px; gap: 2px; }
.w-col4 { width: 91px; margin-left: 6px; }
.more-wrap { width: 38px; display: flex; flex-direction: column; align-items: center; flex: none; }
.more-btn { width: 38px; height: 35px; display: flex; align-items: center; justify-content: center; border: 1px solid #bcbcbc; border-radius: 4px; background: linear-gradient(#ececec, #dadada); }
.more-wrap > span { margin-top: 1px; line-height: 20px; }
.more-wrap .caret { margin-top: 6px; width: 9px; height: 5px; }
.w-col4 + .more-wrap { margin-left: 3px; }

.g-sync { width: 629px; }
.sync-grid { width: 608px; display: grid; grid-template-columns: 152px 152px 152px 152px; grid-template-rows: repeat(3, 26px); margin: -2px 0 0 -2px; }
.g-sync .gscroll { margin-left: 2px; }
.gitem { display: flex; align-items: center; gap: 3px; padding-left: 3px; white-space: nowrap; overflow: hidden; font-family: "Open Sans", "Noto Sans CJK SC", sans-serif; }
.wave { font-weight: 400; font-size: 16px; }
.g-surface { width: 130px; flex-direction: column; border-right: 0; padding-left: 3px; overflow: hidden; }
.g-surface .sitem:first-child { margin-top: -2px; }

/* selection bar */
.selbar {
  height: 56px; flex: none; display: flex; align-items: center; background: #dcdcdc;
  border-bottom: 1px solid #f0f0f0;
}
.menu-btn { width: 111px; height: 50px; padding-left: 10px; display: flex; align-items: center; gap: 4px; border-right: 1px solid #f2f2f2; flex: none; }
.menu-btn .caret { margin-left: 3px; width: 8px; height: 5px; }
.menu-btn span { white-space: nowrap; }
.combo {
  height: 25px; display: flex; align-items: center; flex: none; background: #fff; padding-left: 0;
  border: 1px solid #a0a0a0; border-top: 2px solid #707070; border-left: 2px solid #707070; border-radius: 4px; overflow: hidden;
}
.combo > span:first-child, .combo > svg + span { flex: 1; min-width: 0; white-space: nowrap; }
.dd {
  width: 21px; align-self: stretch; flex: none; display: flex; align-items: center; justify-content: center;
  background: linear-gradient(#dbe9f6, #bcd5ee 40%, #6aa8e4 60%, #3f8fe0);
}
.dd::after { content: ""; border: 6px solid transparent; border-bottom: 0; border-top: 7px solid #111; }
.dd-arrow::after { border: 0; width: 12px; height: 13px; background: #111; clip-path: polygon(30% 0, 70% 0, 70% 50%, 100% 50%, 50% 100%, 0 50%, 30% 50%); }
.c-filter { width: 180px; margin-left: 13px; }
.c-assem { width: 190px; margin-left: 10px; }
.c-face { width: 190px; }
.c-curve { width: 190px; margin-left: 10px; }
.c-body { width: 190px; margin-left: 12px; }
.tools { display: flex; align-items: center; flex: none; }
.t-a { width: 286px; padding-left: 11px; gap: 8px; }
.t-a .caret { margin: 0 -2px 0 -1px; }
.t-a .push { margin-left: 3px; }
.t-b { padding-left: 10px; }
.t-b .ic16 { margin: 0 7px 0 15px; }
.t-b .ic22 { margin-left: 9px; }
.t-b .ic22 + .ic24 { margin-left: 10px; }
.snaps { display: flex; gap: 1px; }
.snap { width: 31px; height: 31px; display: flex; align-items: center; justify-content: center; background: #fff; border: 1px solid #8c8c8c; border-radius: 3px; }

/* cue line */
.cue { height: 24px; flex: none; display: flex; background: #dedede; border-bottom: 2px solid #a8a8a8; font-weight: 700; line-height: 22px; }
.cue-msg { width: 912px; padding-left: 3px; border-right: 1px solid #f2f2f2; white-space: nowrap; }

/* workspace */
.workspace { flex: 1; min-height: 0; display: flex; }
.graphics { width: 1370px; display: flex; flex-direction: column; flex: none; }
.doc-tabs { height: 24px; flex: none; background: #e9e9e9; }
.doc-tab { width: 122px; height: 24px; display: flex; align-items: center; background: #5c5c5c; color: #f4f4f4; padding-left: 6px; gap: 6px; font-family: "Open Sans", sans-serif; font-size: 16px; }
.doc-tab b { font-weight: 400; font-size: 18px; color: #c4c4c4; margin-left: -1px; }
.canvas { flex: 1; background: #000; border-top: 3px solid #555; }

.navigator { flex: 1; min-width: 0; display: flex; flex-direction: column; background: #e8e8e8; border-left: 1px solid #f4f4f4; overflow: hidden; }
.nav-title { height: 36px; flex: none; display: flex; align-items: center; padding-left: 13px; gap: 12px; }
.win-icon { width: 16px; height: 15px; border: 1px solid #111; border-top-width: 3px; background: #fff; }
.nav-title strong { font-weight: 700; }
.tree { margin-left: 9px; width: 240px; height: 648px; flex: none; border: 2px solid #8a8a8a; border-right: 0; background: #fff; overflow: hidden; }
.thead { height: 24px; display: flex; border-bottom: 2px solid #8a8a8a; background: linear-gradient(#eeeeee, #d8d8d8); }
.th-name { width: 200px; padding-left: 5px; border-right: 1px solid #bbb; display: flex; align-items: center; }
.th-new { flex: 1; padding-left: 6px; line-height: 22px; white-space: nowrap; overflow: hidden; }
.sort { margin-left: 19px; border: 6px solid transparent; border-top: 0; border-bottom: 6px solid #111; }
.row { height: 24px; display: flex; background: #fff; border-bottom: 1px solid #ebebeb; }
.row.alt { background: #f6f6f6; }
.name { width: 200px; flex: none; border-right: 1px solid #e6e6e6; display: flex; align-items: center; padding-left: 4px; color: #222; position: relative; white-space: nowrap; }
.name > span { margin-left: 3px; }
.new { flex: 1; display: flex; align-items: center; padding-left: 5px; }
.exp { width: 10px; height: 10px; border: 1px solid #888; border-radius: 2px; background: #f4f4f4; font: 700 9px/8px "Liberation Sans", sans-serif; text-align: center; font-style: normal; color: #222; flex: none; }
.mv { margin-left: 5px; }
.cam-check { margin-left: 6px; margin-right: 2px; }
.name > .cam { margin-left: 2px; }
.leaf .name { padding-left: 39px; }
.leaf .name::before { content: ""; position: absolute; left: 27px; top: -1px; bottom: -1px; border-left: 1px dotted #888; }
.leaf .name::after { content: ""; position: absolute; left: 28px; top: 11px; width: 10px; border-top: 1px dotted #888; }
.box { width: 13px; height: 13px; flex: none; border: 1px solid #111; background: #fff; margin-right: 2px; display: flex; align-items: center; justify-content: center; }
.muted .name > span { color: #a6a6a6; }
.hscroll { height: 13px; flex: none; margin-left: 9px; display: flex; align-items: center; gap: 6px; }
.hs-track { width: 196px; height: 2px; background: #c8c8c8; }
.hs-thumb { flex: 1; height: 6px; border: 1px solid #a8a8a8; border-right: 0; background: #ececec; }
.nav-sec {
  height: 26px; flex: none; margin-left: 9px; padding-left: 5px; line-height: 25px; color: #0a1a70;
  background: linear-gradient(#f6f6f6 0 50%, #dddddd 50% 100%); border-bottom: 2px solid #a0a0a0;
}

/* floating dialog */
.dialog { position: absolute; left: 704px; top: 247px; width: 380px; height: 488px; background: #e9e9e9; box-shadow: 0 2px 4px rgba(0,0,0,.5); }
.dlg-title { height: 24px; display: flex; align-items: stretch; color: #f5f5f5; background: linear-gradient(#555 0, #444 30%, #111 35%, #151515); }
.dt-gear { width: 25px; display: flex; align-items: center; justify-content: center; border-right: 1px solid #777; }
.dt-name { flex: 1; padding-left: 5px; line-height: 22px; }
.dt-btn { width: 24px; display: flex; align-items: center; justify-content: center; border-left: 1px solid #777; }
.dlg-body { height: 459px; padding: 4px 7px 0 7px; }
.sec-h {
  height: 26px; display: flex; align-items: stretch; padding-left: 5px; color: #0a1a70;
  background: linear-gradient(#f6f6f6 0 55%, #e2e2e2 55% 100%); border-bottom: 2px solid #808080;
}
.sec-h > span { flex: 1; line-height: 26px; }
.sec-c { width: 26px; border-left: 1px solid #aaa; display: flex; align-items: center; justify-content: center; }
.chev { width: 12px; height: 8px; }
.sec-b { background: #d0d0d0; padding: 0 8px 0 7px; display: flex; flex-direction: column; border-left: 1px solid #a8a8a8; border-right: 1px solid #a8a8a8; }
.b-type { height: 43px; justify-content: center; padding-bottom: 4px; }
.b-obj { height: 47px; justify-content: center; padding-bottom: 4px; }
.b-ori { height: 77px; padding-top: 5px; }
.b-par { height: 129px; padding-top: 4px; }
.c-type { width: 100%; height: 27px; padding-left: 3px; gap: 3px; }
.sel-row { height: 31px; display: flex; align-items: center; border-radius: 5px 0 0 5px; background: linear-gradient(90deg, #dca676, #dcc0a4 60%, #d0d0d0 90%); }
.star { width: 20px; padding-left: 2px; color: #e00000; font: 700 24px/24px "Liberation Sans", sans-serif; height: 20px; }
.sel-text { flex: 1; white-space: nowrap; font-family: "Open Sans", "Noto Sans CJK SC", sans-serif; }
.tbtn { display: flex; align-items: center; justify-content: center; flex: none; border: 1px solid #888; border-radius: 4px; background: linear-gradient(#f6f6f6, #d8d8d8); position: relative; }
.tbtn-s { width: 22px; height: 22px; margin-right: 4px; }
.tbtn-on { width: 30px; height: 30px; border-color: #b05020; background: linear-gradient(#ffb080, #f88840); }
.frow { display: flex; align-items: center; height: 28px; }
.frow label { flex: 1; }
.c-field { width: 150px; height: 26px; padding-left: 3px; }
.latin { font-family: "Open Sans", sans-serif; font-size: 16px; }
.frow-ori { height: 32px; margin-top: 3px; }
.frow-ori > .ic14 { margin-left: 1px; margin-right: 5px; }
.ori-text { flex: 1; }
.tbtn-axes { width: 30px; height: 30px; }
.tbtn-axes b { position: absolute; font: 700 8px/8px "Liberation Sans", sans-serif; color: #222; }
.ax-y { right: 2px; top: 4px; } .ax-x { right: 2px; bottom: 2px; } .ax-z { left: 5px; top: 1px; }
.chk-row { height: 26px; display: flex; align-items: center; gap: 7px; margin-bottom: 2px; }
.chk { width: 15px; height: 15px; border: 1px solid #2a5aa8; border-radius: 2px; background: linear-gradient(135deg, #a8d0f8, #5a90d8); position: relative; }
.chk::after { content: ""; position: absolute; left: 3px; top: 0; width: 5px; height: 9px; border: solid #0c2a6a; border-width: 0 2.5px 2.5px 0; transform: rotate(40deg); }
.f30 { height: 26px; margin-bottom: 4px; }
.val { flex: none !important; width: 85px; }
.unit { flex: 1; align-self: stretch; background: #d4d4d4; padding-left: 3px; line-height: 22px; font-family: "Open Sans", sans-serif; }
.sec-more { height: 13px; display: flex; justify-content: center; align-items: center; gap: 3px; background: linear-gradient(#f6f6f6 0 50%, #e0e0e0 50% 100%); border-bottom: 1px solid #999; }
.dlg-actions { display: flex; justify-content: flex-end; gap: 7px; padding: 8px 10px 0 0; margin-top: 1px; border-top: 1px solid #fafafa; box-shadow: inset 0 1px 0 #ccc; }
.act { width: 58px; height: 26px; line-height: 22px; border: 1px solid #666; border-radius: 3px; background: linear-gradient(#f6f6f6, #dcdcdc); }
.act.off { color: #9c9c9c; border: 2px solid #c4c4c4; }
.dialog::after { content: ""; position: absolute; left: 0; right: 0; bottom: 0; height: 5px; background: #1a1a1a; }

/* watermark overlay */
.watermark { position: absolute; left: 1335px; top: 900px; width: 283px; height: 95px; pointer-events: none; }
.wm-logo { position: absolute; left: 0; top: 0; width: 72px; height: 84px; }
.wm-cn { position: absolute; left: 80px; top: 8px; font: 700 33px/44px "Noto Sans CJK SC", sans-serif; letter-spacing: 3px; color: rgba(255,255,255,.5); white-space: nowrap; }
.wm-3d { font: 700 36px/44px "DejaVu Sans", sans-serif; letter-spacing: 4px; margin-right: 5px; }
.wm-en { position: absolute; left: 82px; top: 56px; font: 700 12.5px/16px "Liberation Sans", sans-serif; letter-spacing: 4px; color: rgba(255,255,255,.55); white-space: nowrap; }
```
